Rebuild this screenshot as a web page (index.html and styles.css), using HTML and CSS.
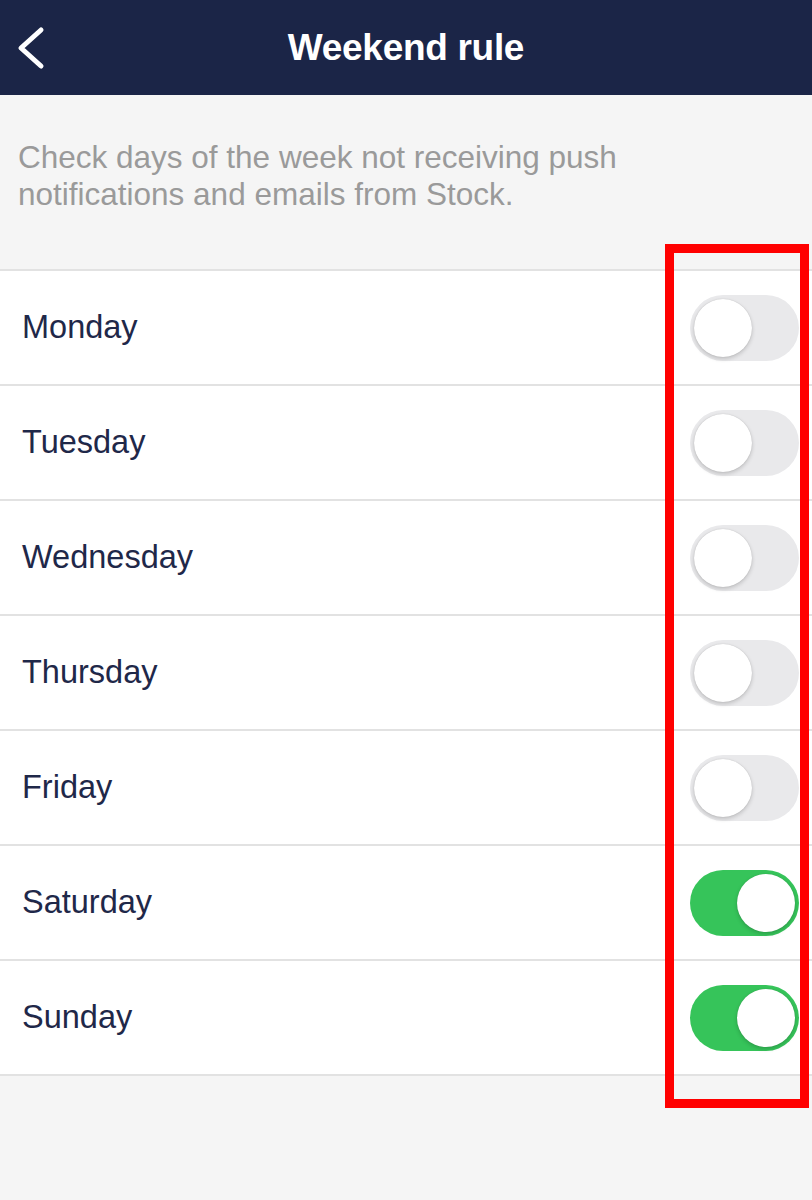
FILE: index.html
```html
<!DOCTYPE html>
<html lang="en">
<head>
  <meta charset="UTF-8">
  <meta name="viewport" content="width=device-width, initial-scale=1.0">
  <title>Weekend rule</title>
  <link rel="stylesheet" href="styles.css">
</head>
<body>

<div class="header">
  <div class="back-btn">
    <svg width="30" height="44" viewBox="0 0 30 44">
      <path d="M26 4 L6 22 L26 40" fill="none" stroke="#ffffff" stroke-width="5" stroke-linecap="round" stroke-linejoin="round"/>
    </svg>
  </div>
  <div class="title">Weekend rule</div>
</div>

<div class="desc">Check days of the week not receiving push notifications and emails from Stock.</div>

<div class="list">
  <div class="row"><div class="label">Monday</div><div class="switch"><div class="knob"></div></div></div>
  <div class="row"><div class="label">Tuesday</div><div class="switch"><div class="knob"></div></div></div>
  <div class="row"><div class="label">Wednesday</div><div class="switch"><div class="knob"></div></div></div>
  <div class="row"><div class="label">Thursday</div><div class="switch"><div class="knob"></div></div></div>
  <div class="row"><div class="label">Friday</div><div class="switch"><div class="knob"></div></div></div>
  <div class="row"><div class="label">Saturday</div><div class="switch on"><div class="knob"></div></div></div>
  <div class="row"><div class="label">Sunday</div><div class="switch on"><div class="knob"></div></div></div>
</div>

<div class="highlight"></div>

</body>
</html>
```

FILE: styles.css
```css
html, body {
  margin: 0;
  padding: 0;
  background: #f5f5f5;
  font-family: "Liberation Sans", Arial, sans-serif;
}
body {
  position: relative;
  min-height: 1200px;
}
.header {
  height: 95px;
  background: #1b2547;
  display: flex;
  align-items: center;
  justify-content: center;
  position: relative;
}
.back-btn {
  position: absolute;
  left: 15px;
  top: 26px;
}
.title {
  color: #ffffff;
  font-weight: bold;
  font-size: 37px;
  letter-spacing: -0.3px;
}
.desc {
  padding: 44px 120px 56px 18px;
  font-size: 31.5px;
  line-height: 37px;
  color: #9a9a9a;
}
.list {
  background: #ffffff;
  border-top: 2px solid #e2e2e2;
}
.row {
  height: 113px;
  display: flex;
  align-items: center;
  justify-content: space-between;
  border-bottom: 2px solid #e2e2e2;
  padding: 0 13px 0 22px;
}
.label {
  font-size: 32.5px;
  color: #1f2849;
}
.switch {
  width: 109px;
  height: 66px;
  border-radius: 33px;
  background: #e9e9eb;
  box-sizing: border-box;
  padding: 4px;
  display: flex;
  justify-content: flex-start;
}
.switch.on {
  background: #36c45a;
  justify-content: flex-end;
}
.knob {
  width: 58px;
  height: 58px;
  border-radius: 50%;
  background: #ffffff;
  box-shadow: 0 2px 4px rgba(0,0,0,0.18), 0 0 1px rgba(0,0,0,0.2);
}
.highlight {
  position: absolute;
  left: 665px;
  top: 244px;
  width: 144px;
  height: 864px;
  box-sizing: border-box;
  border: 9px solid #ff0000;
}
```
